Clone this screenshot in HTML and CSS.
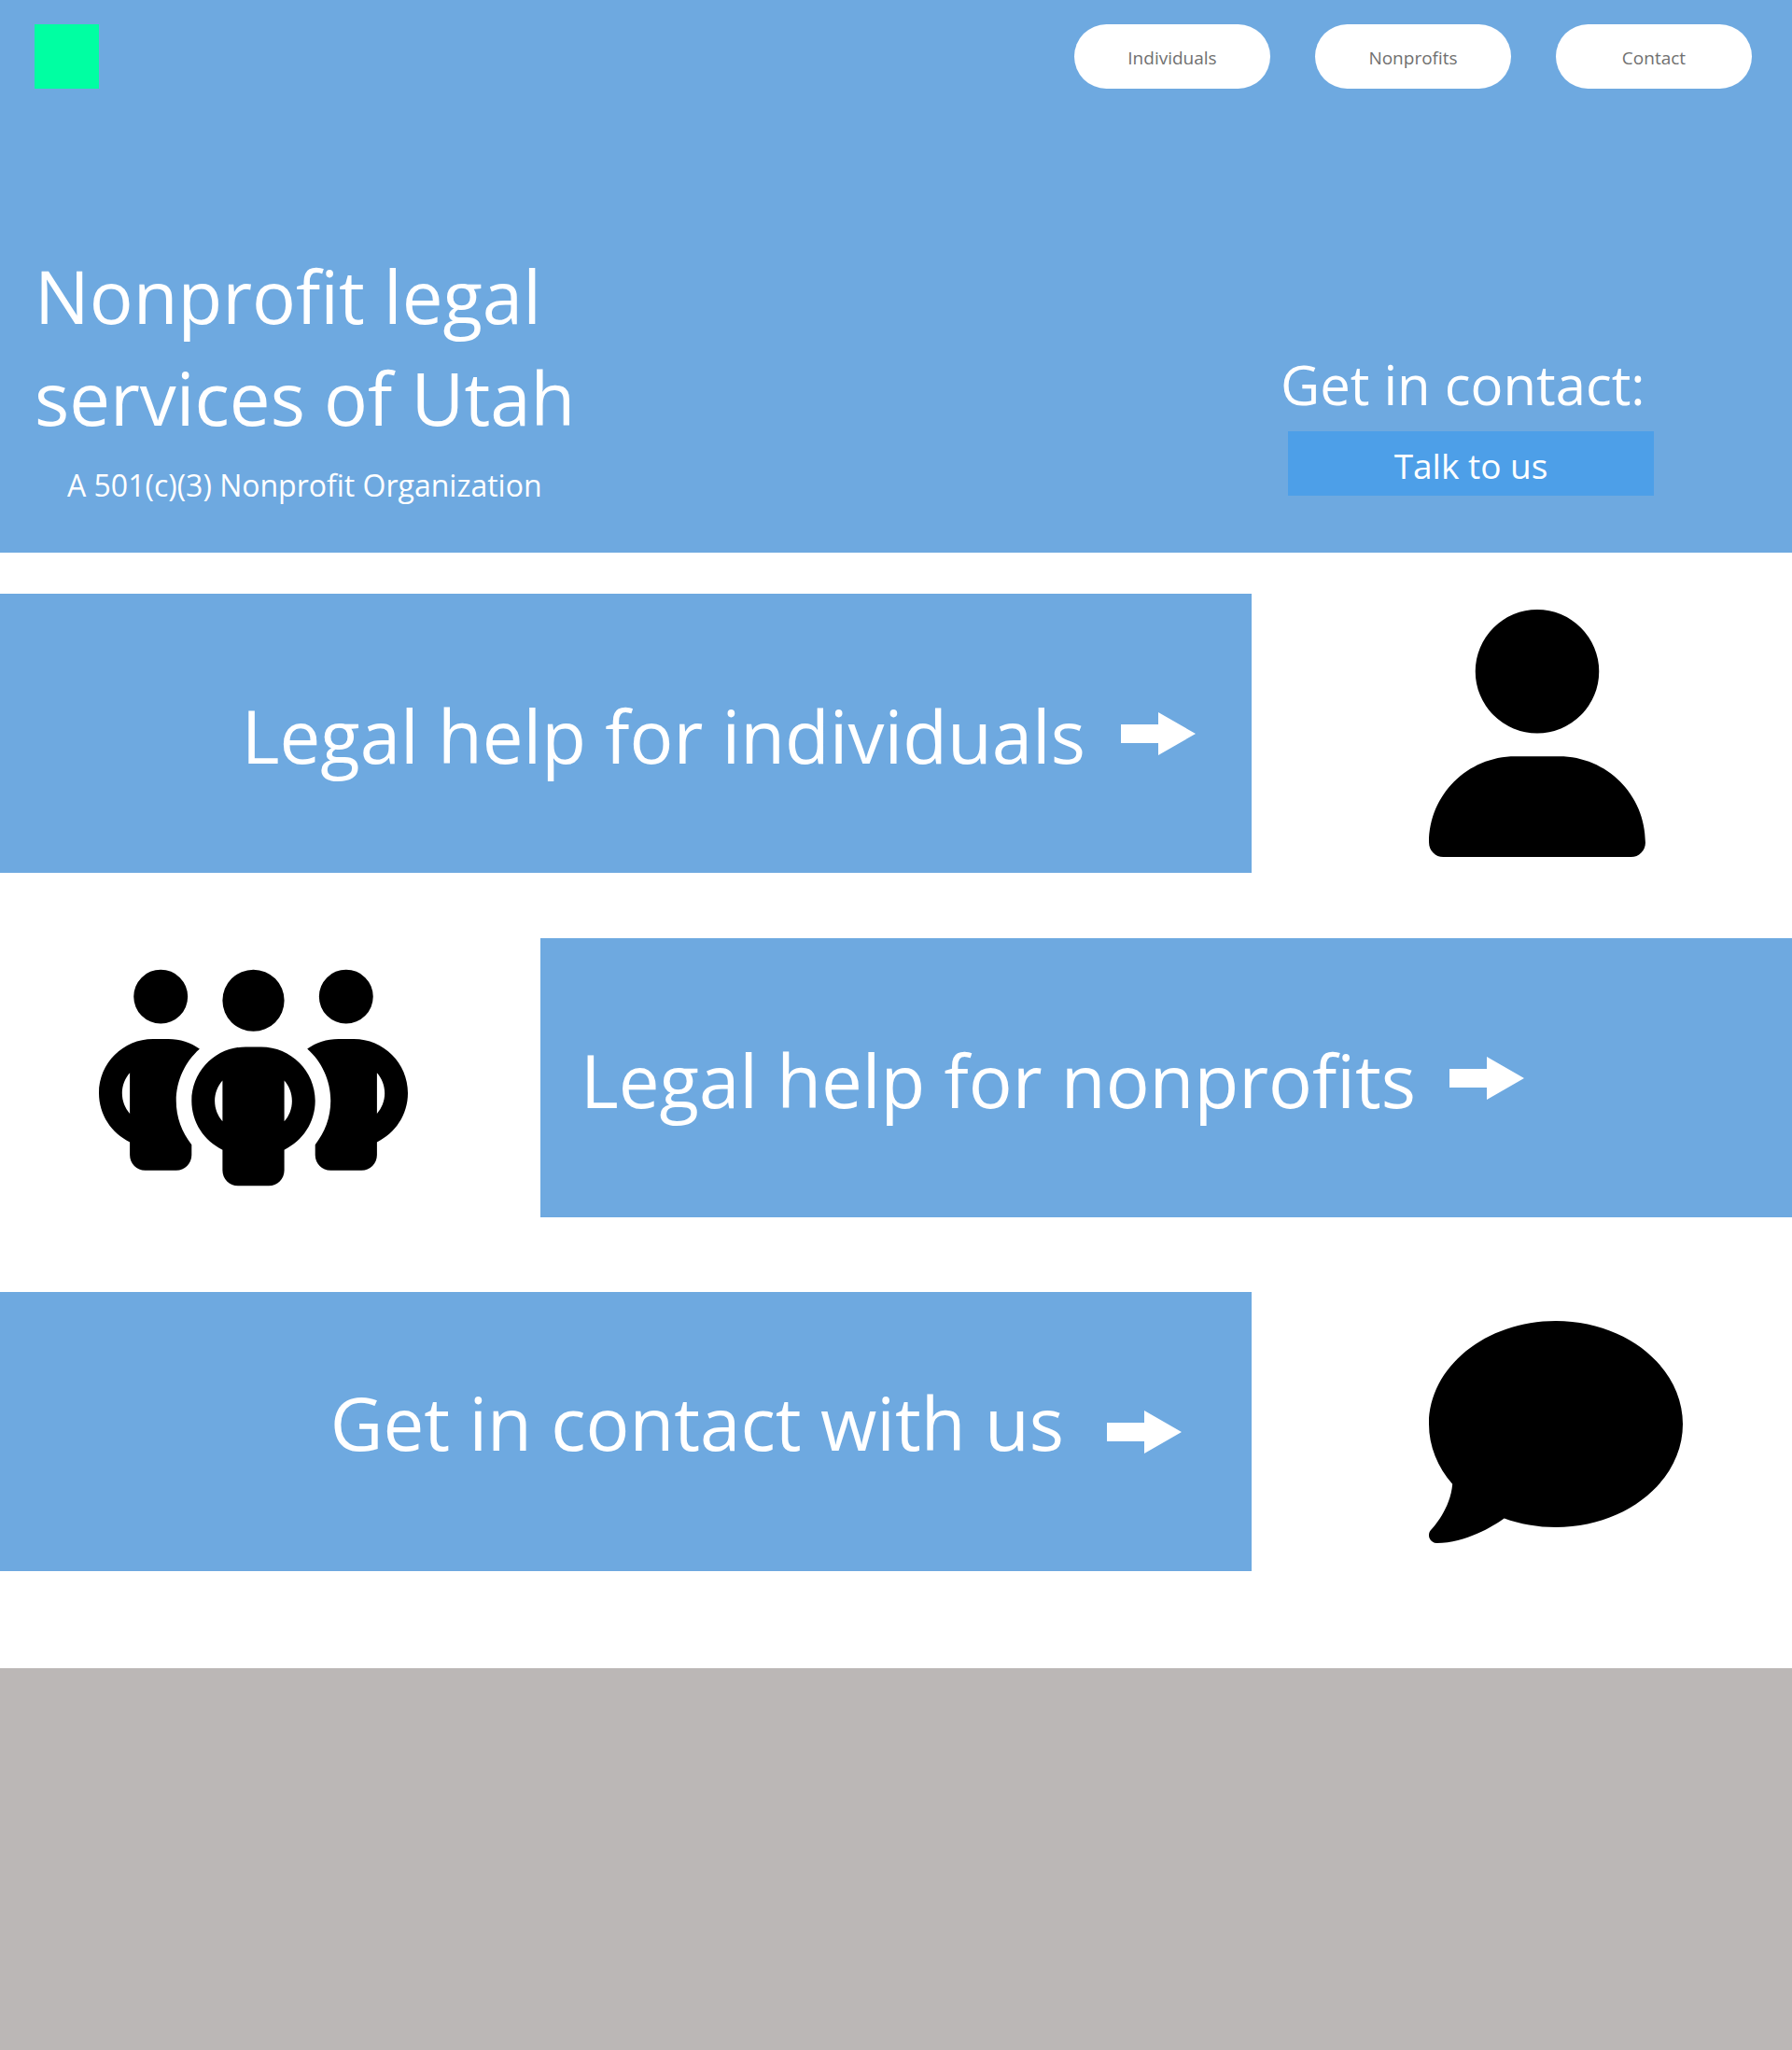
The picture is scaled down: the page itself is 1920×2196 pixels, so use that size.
FILE: index.html
```html
<!DOCTYPE html>
<html lang="en">
<head>
  <meta charset="utf-8">
  <meta name="viewport" content="width=device-width, initial-scale=1">
  <title>Nonprofit legal services of Utah</title>
  <link rel="stylesheet" href="styles.css">
</head>
<body>
  <header class="hero">
    <div class="topbar">
      <a class="logo" href="#" aria-label="Home"></a>
      <nav class="nav">
        <a class="nav-link" href="#individuals">Individuals</a>
        <a class="nav-link" href="#nonprofits">Nonprofits</a>
        <a class="nav-link" href="#contact">Contact</a>
      </nav>
    </div>
    <div class="hero-body">
      <div class="intro">
        <h1 class="title">Nonprofit legal<br>services of Utah</h1>
        <p class="subtitle">A 501(c)(3) Nonprofit Organization</p>
      </div>
      <div class="cta">
        <h2 class="cta-title">Get in contact:</h2>
        <button class="cta-button" type="button">Talk to us</button>
      </div>
    </div>
  </header>

  <main class="sections">
    <section class="row" id="individuals">
      <a class="banner banner-individuals" href="#individuals">
        <span class="banner-text">Legal help for individuals</span>
        <svg class="arrow" viewBox="0 0 80 46" aria-hidden="true"><path d="M0 13H40V0L80 23L40 46V33H0z"/></svg>
      </a>
      <div class="picture">
        <svg class="icon-user" viewBox="0 0 448 512" aria-hidden="true"><path d="M224 256A128 128 0 1 0 224 0a128 128 0 1 0 0 256zm-45.7 48C79.8 304 0 383.8 0 482.3C0 498.7 13.3 512 29.7 512H418.3c16.4 0 29.7-13.3 29.7-29.7C448 383.8 368.2 304 269.7 304H178.3z"/></svg>
      </div>
    </section>

    <section class="row row-reverse" id="nonprofits">
      <a class="banner banner-nonprofits" href="#nonprofits">
        <span class="banner-text">Legal help for nonprofits</span>
        <svg class="arrow" viewBox="0 0 80 46" aria-hidden="true"><path d="M0 13H40V0L80 23L40 46V33H0z"/></svg>
      </a>
      <div class="picture">
        <svg class="icon-group" viewBox="0 0 640 512" aria-hidden="true"><path d="M72 88a56 56 0 1 1 112 0A56 56 0 1 1 72 88zM64 245.7C54 256.9 48 271.8 48 288s6 31.1 16 42.3V245.7zm144.4-49.3C178.7 222.7 160 261.2 160 304c0 34.3 12 65.8 32 90.5V416c0 17.7-14.3 32-32 32H96c-17.7 0-32-14.3-32-32V389.2C26.2 371.2 0 332.7 0 288c0-61.9 50.1-112 112-112h32c24 0 46.2 7.5 64.4 20.3zM448 416V394.5c20-24.7 32-56.2 32-90.5c0-42.8-18.7-81.3-48.4-107.7C449.8 183.5 472 176 496 176h32c61.9 0 112 50.1 112 112c0 44.7-26.2 83.2-64 101.2V416c0 17.7-14.3 32-32 32H480c-17.7 0-32-14.3-32-32zm8-328a56 56 0 1 1 112 0A56 56 0 1 1 456 88zM576 245.7v84.7c10-11.3 16-26.1 16-42.3s-6-31.1-16-42.3zM320 32a64 64 0 1 1 0 128 64 64 0 1 1 0-128zM240 304c0 16.2 6 31 16 42.3V261.7c-10 11.3-16 26.1-16 42.3zm144-42.3v84.7c10-11.3 16-26.1 16-42.3s-6-31.1-16-42.3zM448 304c0 44.7-26.2 83.2-64 101.2V448c0 17.7-14.3 32-32 32H288c-17.7 0-32-14.3-32-32V405.2c-37.8-18-64-56.5-64-101.2c0-61.9 50.1-112 112-112h32c61.9 0 112 50.1 112 112z"/></svg>
      </div>
    </section>

    <section class="row" id="contact">
      <a class="banner banner-contact" href="#contact">
        <span class="banner-text">Get in contact with us</span>
        <svg class="arrow" viewBox="0 0 80 46" aria-hidden="true"><path d="M0 13H40V0L80 23L40 46V33H0z"/></svg>
      </a>
      <div class="picture">
        <svg class="icon-comment" viewBox="0 0 512 512" aria-hidden="true"><path d="M512 240c0 114.9-114.6 208-256 208c-37.1 0-72.3-6.4-104.1-17.9c-11.9 8.7-31.3 20.6-54.3 30.6C73.6 471.1 44.7 480 16 480c-6.5 0-12.3-3.9-14.8-9.9c-2.5-6-1.1-12.8 3.4-17.4c.3-.3.7-.7 1.3-1.4c1.1-1.2 2.8-3.1 4.9-5.7c4.1-5 9.6-12.4 15.2-21.6c10-16.6 19.5-38.4 21.4-62.9C17.7 326.8 0 285.1 0 240C0 125.1 114.6 32 256 32s256 93.1 256 208z"/></svg>
      </div>
    </section>
  </main>

  <footer class="footer"></footer>
</body>
</html>
```
FILE: styles.css
```css
* {
  box-sizing: border-box;
}

body {
  margin: 0;
  background: #fff;
  font-family: "Segoe UI", "Open Sans", sans-serif;
}

h1, h2, p {
  margin: 0;
  font-weight: 400;
}

a {
  text-decoration: none;
}

.hero {
  padding: 26px 43px 44px 37px;
  background: #6ea9e0;
  color: #fff;
}

.topbar {
  display: flex;
  justify-content: space-between;
}

.logo {
  width: 69px;
  height: 69px;
  background: #00ffa2;
}

.nav {
  display: flex;
  gap: 48px;
}

.nav-link {
  width: 210px;
  height: 69px;
  border-radius: 35px;
  background: #fff;
  color: #707070;
  font-size: 19px;
  line-height: 72px;
  text-align: center;
}

.hero-body {
  display: flex;
  justify-content: space-between;
  align-items: flex-end;
  margin-top: 168px;
}

.title {
  font-size: 78px;
  line-height: 109px;
}

.subtitle {
  padding: 17px 0 6px 35px;
  font-size: 32px;
  line-height: 44px;
}

.cta {
  width: 405px;
  margin-right: 100px;
  padding-bottom: 17px;
}

.cta-title {
  padding-bottom: 10px;
  font-size: 58px;
  line-height: 80px;
  white-space: nowrap;
}

.cta-button {
  display: block;
  width: 392px;
  height: 69px;
  margin-left: 8px;
  padding: 4px 0 0;
  border: 0;
  background: #4d9fe8;
  color: #fff;
  font: inherit;
  font-size: 37px;
}

.sections {
  padding: 44px 0 104px;
}

.row {
  display: flex;
  align-items: center;
}

.row-reverse {
  flex-direction: row-reverse;
  margin: 70px 0 80px;
}

.banner {
  display: flex;
  flex: 0 0 69.84%;
  align-items: center;
  min-height: 299px;
  background: #6ea9e0;
  color: #fff;
  font-size: 78px;
  line-height: 109px;
  white-space: nowrap;
}

.banner-text {
  padding-top: 6px;
}

.banner-individuals {
  justify-content: flex-end;
  gap: 38px;
  padding-right: 60px;
}

.banner-nonprofits {
  gap: 36px;
  padding-left: 43px;
}

.banner-contact {
  justify-content: flex-end;
  gap: 46px;
  padding-right: 75px;
}

.banner-contact .banner-text {
  padding: 0 0 18px;
}

.arrow {
  width: 80px;
  height: 46px;
  fill: #fff;
}

.picture {
  display: flex;
  flex: 1;
  padding-left: 190px;
}

.row-reverse .picture {
  padding-left: 106px;
}

.icon-user {
  width: 232px;
  height: 265px;
}

.icon-group {
  width: 331px;
  height: 265px;
}

.icon-comment {
  width: 272px;
  height: 272px;
}

.footer {
  height: 409px;
  background: #bbb7b6;
}
```
